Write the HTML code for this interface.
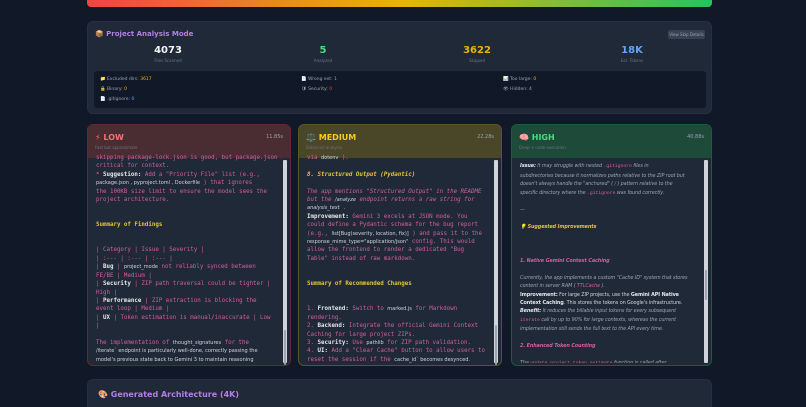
<!DOCTYPE html>
<html><head><meta charset="utf-8"><style>
*{box-sizing:border-box;margin:0;padding:0}
html,body{width:806px;height:407px;overflow:hidden}
body{background:#111827;font-family:"DejaVu Sans","Liberation Sans",sans-serif;color:#e5e7eb;position:relative}
.bar{position:absolute;left:87px;top:0;width:625px;height:7px;border-radius:0 0 4px 4px;background:linear-gradient(90deg,#ef4444,#eab308 50%,#22c55e)}
.panel{position:absolute;left:87px;top:21px;width:625px;height:93px;background:#1f2937;border-radius:6px;border:1px solid #263042}
.pt{position:absolute;left:7px;top:8px;font-size:7px;font-weight:bold;color:#b57ee6}
.btn{position:absolute;right:6px;top:8px;width:37px;height:9px;background:#374151;border-radius:2px;font-size:4px;color:#9ca3af;text-align:center;line-height:9px}
.st{position:absolute;top:23px;width:100px;text-align:center}
.st b{display:block;font-size:10px;font-weight:bold}
.st span{display:block;font-size:4px;color:#6b7280;margin-top:2px}
.inner{position:absolute;left:6px;top:49px;width:612px;height:37px;background:#111827;border-radius:3px;font-size:4.5px;color:#9ca3af}
.inner div{position:absolute}
.card{position:absolute;top:124px;height:242px;border-radius:6px;overflow:hidden;background:#1f2937}
.hd{height:33px;position:relative;padding:8px 7px}
.hd .t{font-size:8px;font-weight:bold}
.hd .s{font-size:4px;color:#6b7280;margin-top:3px}
.hd .tm{position:absolute;right:7px;top:9px;font-size:5px;color:#9ca3af}
.bd{position:absolute;left:2px;right:8px;top:33px;bottom:2px;padding:0 6px;font-family:"DejaVu Sans Mono","Liberation Mono",monospace;font-size:5.8px;line-height:8.4px;color:#d45f9c;overflow:hidden;white-space:nowrap}
.sb{position:absolute;right:3px;top:35px;bottom:2px;width:4px;background:#d1d5db;border-radius:1px}
.sb i{position:absolute;left:1px;width:2px;background:#9ca3af;border-radius:1px}
.w{color:#e5e7eb;font-weight:bold}
.n{font-family:"DejaVu Sans",sans-serif;color:#d1d5db;font-size:5px}
.y{color:#e5c33a;font-weight:bold}
.it{font-style:italic}
.bd2{font-family:"DejaVu Sans",sans-serif;font-style:italic;color:#9ca3af;font-size:4.9px;line-height:8.4px;letter-spacing:-0.1px}
.bot{position:absolute;left:87px;top:379px;width:625px;height:40px;background:#1f2937;border-radius:6px;border:1px solid #263042}
</style></head><body>
<div class="bar"></div>
<div class="panel">
<div class="pt">📦 Project Analysis Mode</div>
<div class="btn">View Skip Details</div>
<div class="st" style="left:30px"><b style="color:#f3f4f6">4073</b><span>Files Scanned</span></div>
<div class="st" style="left:185px"><b style="color:#4ade80">5</b><span>Analyzed</span></div>
<div class="st" style="left:339px"><b style="color:#eab308">3622</b><span>Skipped</span></div>
<div class="st" style="left:494px"><b style="color:#60a5fa">18K</b><span>Est. Tokens</span></div>
<div class="inner">
<div style="left:6px;top:6px">📁 Excluded dirs: <span style="color:#eab308">3617</span></div>
<div style="left:207px;top:6px">📄 Wrong ext: 1</div>
<div style="left:409px;top:6px">📊 Too large: <span style="color:#eab308">0</span></div>
<div style="left:6px;top:16px">🔒 Binary: <span style="color:#eab308">0</span></div>
<div style="left:207px;top:16px">🛡 Security: <span style="color:#ef4444">0</span></div>
<div style="left:409px;top:16px">👁 Hidden: 4</div>
<div style="left:6px;top:26px">📄 .gitignore: <span style="color:#60a5fa">0</span></div>
</div>
</div>

<div class="card" style="left:87px;width:204px;border:1px solid #5b2b36">
<div class="hd" style="background:#4a2c33"><div class="t" style="color:#f87171">⚡ LOW</div><div class="s">Fast but approximate</div><div class="tm">11.85s</div></div>
<div class="bd" style="margin-top:-4px">
skipping package-lock.json is good, but package.json is<br>critical for context.<br>* <span class="w">Suggestion:</span> Add a "Priority File" list (e.g.,<br><span class="n">package.json , pyproject.toml , Dockerfile</span> ) that ignores<br>the 100KB size limit to ensure the model sees the<br>project architecture.<br><br><br><span class="y">Summary of Findings</span><br><br><br>| Category | Issue | Severity |<br>| :--- | :--- | :--- |<br>| <span class="w">Bug</span> | <span class="n">project_mode</span> not reliably synced between<br>FE/BE | Medium |<br>| <span class="w">Security</span> | ZIP path traversal could be tighter |<br>High |<br>| <span class="w">Performance</span> | ZIP extraction is blocking the<br>event loop | Medium |<br>| <span class="w">UX</span> | Token estimation is manual/inaccurate | Low<br>|<br><br>The implementation of <span class="n">thought_signatures</span> for the<br><span class="n">/iterate` endpoint is particularly well-done, correctly passing the<br>model's previous state back to Gemini 3 to maintain reasoning<br>continuity.</span></div>
<div class="sb"><i style="top:170px;height:35px"></i></div>
</div>

<div class="card" style="left:298px;width:204px;border:1px solid #5a5428">
<div class="hd" style="background:#4a4628"><div class="t" style="color:#facc15">⚖️ MEDIUM</div><div class="s">Balanced analysis</div><div class="tm">22.28s</div></div>
<div class="bd" style="margin-top:-4px">
via <span class="n">dotenv</span> ).<br><br><span class="y it">8. Structured Output (Pydantic)</span><br><br><span class="it">The app mentions "Structured Output" in the README<br>but the <span class="n">/analyze</span> endpoint returns a raw string for<br><span class="n">analysis_text</span> .</span><br><span class="w">Improvement:</span> Gemini 3 excels at JSON mode. You<br>could define a Pydantic schema for the bug report<br>(e.g., <span class="n">list[Bug(severity, location, fix)]</span> ) and pass it to the<br><span class="n">response_mime_type="application/json"</span> config. This would<br>allow the frontend to render a dedicated "Bug<br>Table" instead of raw markdown.<br><br><br><span class="y">Summary of Recommended Changes</span><br><br><br>1. <span class="w">Frontend:</span> Switch to <span class="n">marked.js</span> for Markdown<br>rendering.<br>2. <span class="w">Backend:</span> Integrate the official Gemini Context<br>Caching for large project ZIPs.<br>3. <span class="w">Security:</span> Use <span class="n">pathlib</span> for ZIP path validation.<br>4. <span class="w">UI:</span> Add a "Clear Cache" button to allow users to<br>reset the session if the <span class="n">cache_id` becomes desynced.</span></div>
<div class="sb"><i style="top:165px;height:40px"></i></div>
</div>

<div class="card" style="left:511px;width:201px;border:1px solid #1f5a42">
<div class="hd" style="background:#1e4a3a"><div class="t" style="color:#4ade80">🧠 HIGH</div><div class="s">Deep + code execution</div><div class="tm">40.88s</div></div>
<div class="bd bd2" style="margin-top:-4px">
<br><span style="color:#e5e7eb;font-weight:bold">Issue:</span> It may struggle with nested <span style="color:#d45f9c;font-family:monospace;font-style:normal">.gitignore</span> files in<br>subdirectories because it normalizes paths relative to the ZIP root but<br>doesn't always handle the "anchored" ( <span style="color:#d45f9c">/</span> ) pattern relative to the<br>specific directory where the <span style="color:#d45f9c;font-family:monospace;font-style:normal">.gitignore</span> was found correctly.<br><br>—<br><br><span style="color:#e5c33a;font-weight:bold">💡 Suggested Improvements</span><br><br><br><br><span style="color:#d45f9c;font-weight:bold">1. Native Gemini Context Caching</span><br><br>Currently, the app implements a custom "Cache ID" system that stores<br>content in server RAM ( <span style="color:#d45f9c">TTLCache</span> ).<br><span style="font-style:normal;color:#d1d5db"><b style="color:#e5e7eb">Improvement:</b> For large ZIP projects, use the <b style="color:#e5e7eb">Gemini API Native<br>Context Caching</b>. This stores the tokens on Google's infrastructure.</span><br><b style="color:#e5e7eb">Benefit:</b> It reduces the billable input tokens for every subsequent<br><span style="color:#d45f9c;font-family:monospace;font-style:normal">iterate</span> call by up to 90% for large contexts, whereas the current<br>implementation still sends the full text to the API every time.<br><br><span style="color:#d45f9c;font-weight:bold">2. Enhanced Token Counting</span><br><br>The <span style="color:#d45f9c;font-family:monospace;font-style:normal">update_project_token_estimate</span> function is called after</div>
<div class="sb"><i style="top:110px;height:30px"></i></div>
</div>

<div class="bot"><div style="position:absolute;left:10px;top:10px;font-size:8px;font-weight:bold;color:#b57ee6">🎨 Generated Architecture (4K)</div></div>
</body></html>
